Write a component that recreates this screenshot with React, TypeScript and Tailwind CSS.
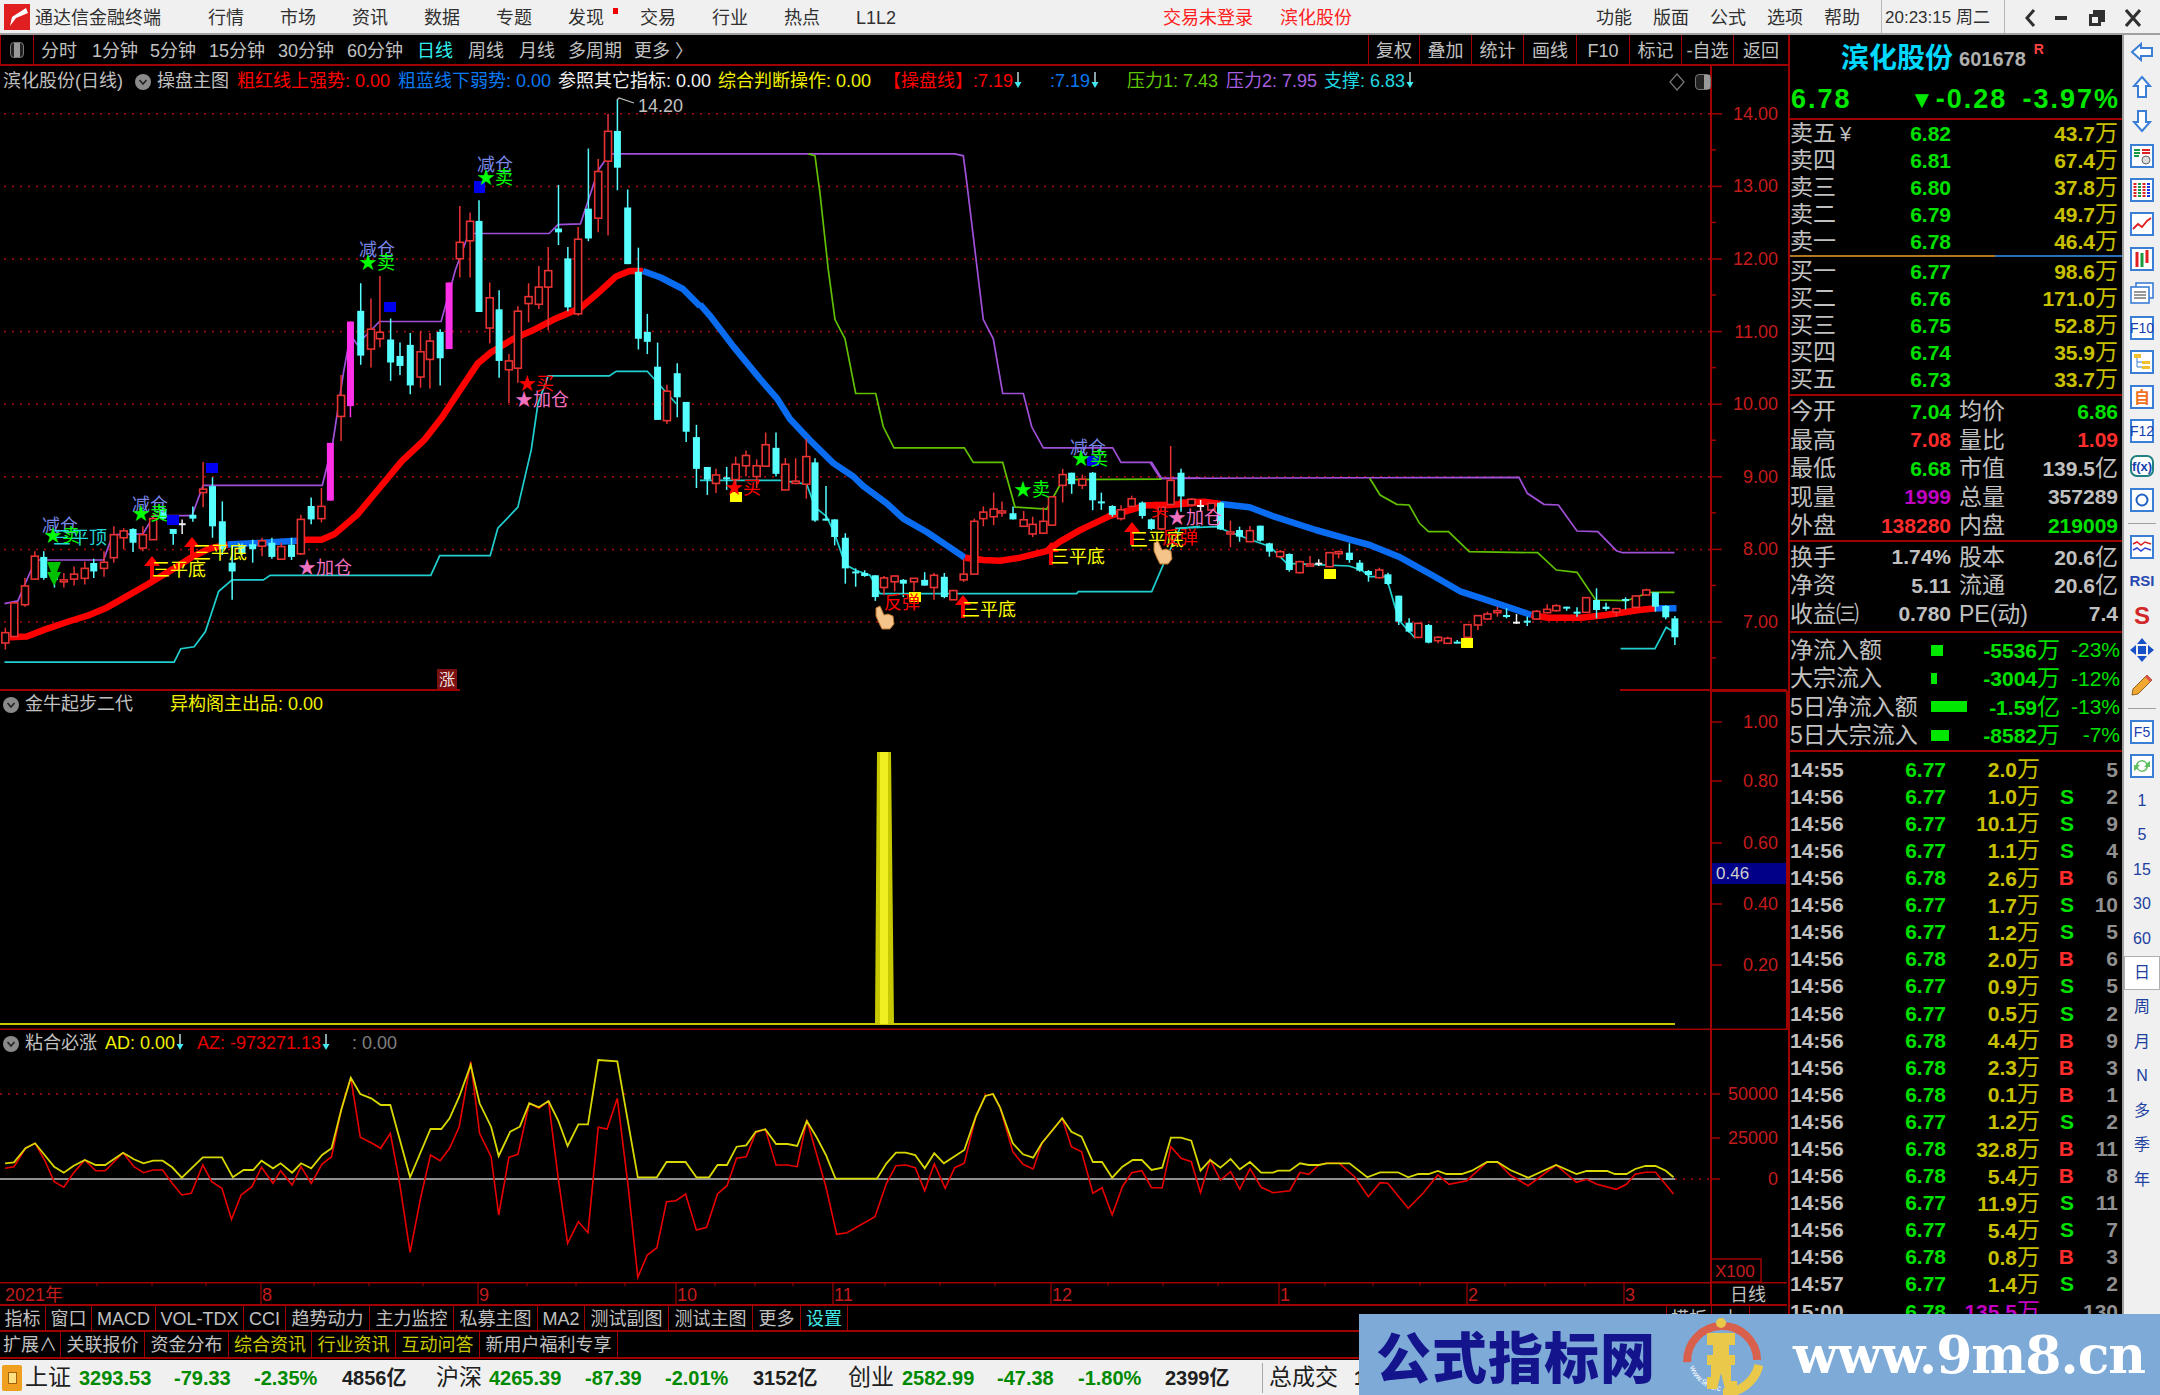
import { ReactNode } from "react";

type Candle = [number, number, number, number, number, string];
type Pt = (x: number, y: number) => [number, number];

// chart data was read off three crops, each with its own scale
const z7: Pt = (x, y) => [x / 2.24, 90 + y / 2.613];
const z8: Pt = (x, y) => [700 + x / 3, 90 + y / 2.613];
const z9: Pt = (x, y) => [1150 + x / 2.412, 400 + y / 3];
const z10: Pt = (x, y) => [x / 1.568, 1020 + y / 3];
const z11: Pt = (x, y) => [1000 + x / 1.96, 1020 + y / 3];

const pts = (f: Pt, a: number[]) => {
  const out: string[] = [];
  for (let i = 0; i < a.length; i += 2) {
    const [x, y] = f(a[i], a[i + 1]);
    out.push(x.toFixed(1) + "," + y.toFixed(1));
  }
  return out.join(" ");
};

const candlesA: Candle[] = [
  [12,1418,1445,1405,1462,"r"],[32,1340,1428,1340,1428,"r"],[56,1296,1345,1275,1350,"r"],[78,1218,1278,1205,1278,"r"],
  [98,1220,1275,1205,1280,"c"],[122,1275,1280,1260,1300,"c"],[143,1280,1284,1262,1300,"r"],[166,1265,1278,1245,1295,"r"],
  [190,1250,1276,1232,1292,"r"],[210,1236,1258,1225,1275,"c"],[233,1234,1250,1205,1272,"r"],[255,1162,1222,1140,1235,"r"],
  [277,1152,1170,1145,1200,"r"],[298,1147,1183,1145,1207,"c"],[320,1162,1197,1140,1205,"r"],[343,1120,1175,1110,1175,"r"],
  [365,1095,1120,1090,1125,"c"],[388,1147,1160,1147,1188,"c"],[408,1132,1135,1122,1160,"w"],[432,1110,1120,1088,1128,"c"],
  [455,1043,1052,972,1090,"r"],[476,1035,1140,1012,1170,"c"],[498,1127,1200,1075,1215,"c"],[520,1235,1258,1190,1332,"c"],
  [542,1190,1210,1185,1215,"c"],[566,1187,1200,1175,1235,"c"],[587,1178,1192,1170,1218,"r"],[609,1183,1220,1170,1225,"c"],
  [630,1193,1226,1183,1228,"r"],[653,1188,1220,1170,1228,"c"],[674,1122,1212,1110,1215,"r"],[697,1087,1122,1065,1135,"c"],
  [720,1088,1120,1040,1130,"r"],[740,922,1073,922,1073,"m"],[764,798,853,745,917,"r"],[785,605,826,605,855,"m"],
  [808,577,694,505,718,"c"],[831,625,677,545,725,"r"],[851,633,650,486,672,"r"],[875,652,712,597,760,"c"],
  [896,695,721,660,745,"c"],[919,666,772,635,795,"c"],[942,684,750,630,778,"r"],[963,656,704,635,780,"r"],
  [986,632,701,625,772,"c"],[1006,503,677,503,677,"m"],[1030,398,441,303,490,"r"],[1053,343,394,320,490,"r"],
  [1073,342,580,288,580,"c"],[1097,543,622,503,662,"r"],[1118,573,708,523,752,"c"],[1140,708,731,690,818,"r"],
  [1160,578,727,565,765,"r"],[1184,540,558,505,607,"r"],[1207,515,560,460,572,"r"],[1228,472,515,410,628,"r"],
  [1251,362,372,248,405,"c"],[1272,440,568,410,578,"c"],[1295,390,585,358,590,"r"],[1318,310,388,153,395,"c"],
  [1340,213,335,180,372,"r"],[1362,108,186,62,380,"r"],[1383,107,203,25,262,"c"],[1406,307,455,260,455,"c"],
  [1430,475,650,412,678,"c"],[1450,632,658,585,690,"c"],[1473,723,862,660,862,"c"],[1494,787,864,770,873,"r"],
  [1517,740,803,714,855,"c"],[1537,815,893,815,920,"c"],[1560,907,990,875,1040,"c"],
];

const candlesB: Candle[] = [
  [22,985,1018,985,1058,"c"],[48,1006,1028,990,1053,"r"],[80,1012,1014,985,1045,"c"],[107,978,1018,958,1040,"r"],
  [138,955,982,942,1010,"r"],[170,982,1010,965,1040,"r"],[197,927,983,895,985,"r"],[228,935,1003,895,1010,"c"],
  [256,978,1045,962,1045,"r"],[287,1022,1028,962,1030,"r"],[319,958,1030,912,1068,"r"],[345,973,1125,962,1128,"c"],
  [378,1120,1125,1035,1125,"c"],[404,1122,1168,1122,1190,"c"],[436,1170,1250,1158,1290,"c"],[467,1258,1262,1250,1298,"c"],
  [494,1262,1270,1255,1272,"c"],[526,1268,1325,1268,1335,"c"],[552,1275,1300,1270,1320,"r"],[584,1270,1285,1268,1310,"r"],
  [610,1280,1290,1278,1325,"c"],[642,1276,1285,1275,1310,"r"],[674,1280,1295,1260,1295,"c"],[702,1268,1300,1262,1332,"r"],
  [733,1272,1325,1262,1328,"c"],[760,1308,1332,1306,1332,"r"],[791,1265,1280,1225,1285,"r"],[823,1127,1265,1120,1265,"r"],
  [850,1103,1120,1088,1140,"r"],[881,1095,1115,1052,1137,"r"],[906,1100,1103,1075,1115,"r"],[939,1106,1122,1088,1122,"c"],
  [971,1123,1140,1100,1142,"r"],[998,1135,1160,1115,1168,"r"],[1030,1127,1158,1090,1160,"r"],[1056,1063,1137,1063,1137,"r"],
  [1088,1005,1033,990,1078,"r"],[1115,1000,1030,1000,1055,"c"],[1147,1017,1033,1005,1043,"r"],[1178,1000,1072,998,1098,"c"],
  [1204,1075,1078,1052,1097,"c"],[1237,1087,1110,1085,1115,"c"],[1263,1097,1120,1085,1125,"r"],[1295,1068,1088,1060,1090,"r"],
  [1327,1078,1113,1075,1120,"c"],[1354,1122,1147,1120,1150,"c"],[1385,1090,1147,1090,1150,"r"],[1412,1020,1083,930,1085,"r"],
  [1443,1000,1062,990,1102,"c"],[1475,1070,1078,1068,1088,"r"],
];

const candlesC: Candle[] = [
  [100,298,315,295,318,"r"],[122,315,318,300,335,"w"],[148,310,330,310,340,"r"],[170,308,388,306,390,"c"],
  [194,396,400,362,442,"r"],[216,390,410,380,425,"c"],[241,392,425,378,425,"r"],[266,377,422,377,425,"c"],
  [288,430,455,428,470,"c"],[314,455,470,450,475,"r"],[336,462,510,460,515,"c"],[361,485,518,482,520,"r"],
  [386,492,497,468,498,"r"],[407,488,491,478,498,"w"],[433,458,500,458,500,"r"],[455,455,460,452,475,"r"],
  [481,458,480,430,488,"c"],[506,488,512,480,515,"c"],[527,513,525,510,545,"c"],[553,510,533,503,535,"r"],
  [574,523,552,518,555,"c"],[600,587,665,587,675,"c"],[625,668,695,655,698,"c"],[647,670,712,668,715,"r"],
  [672,675,728,672,730,"c"],[695,712,722,708,730,"r"],[718,715,730,710,730,"r"],[741,725,730,720,730,"c"],
  [766,674,712,672,715,"r"],[791,647,675,645,690,"r"],[814,642,657,635,658,"r"],[838,632,635,620,650,"r"],
  [860,645,648,625,655,"c"],[884,665,668,642,672,"w"],[910,662,665,650,678,"c"],[932,634,657,630,658,"r"],
  [958,628,638,613,640,"r"],[980,617,632,613,635,"r"],[1005,620,622,620,632,"c"],[1030,635,638,622,650,"c"],
  [1052,593,637,593,637,"r"],[1077,600,630,565,655,"c"],[1100,620,627,608,632,"c"],[1125,626,636,626,650,"r"],
  [1147,597,600,592,628,"c"],[1172,588,622,586,624,"r"],[1197,570,585,566,586,"r"],[1219,577,620,577,635,"c"],
  [1244,618,652,616,658,"c"],[1266,655,712,648,735,"c"],
];

const thick: { c: string; f: Pt; p: number[] }[] = [
  { c: "#ff0000", f: z7, p: [22,1430,60,1428,100,1410,150,1390,200,1372,235,1355,270,1332,330,1292,390,1250,430,1220,470,1198,510,1188] },
  { c: "#0a6cf0", f: z7, p: [510,1188,665,1178] },
  { c: "#ff0000", f: z7, p: [680,1175,720,1175,750,1160,800,1110,850,1040,900,970,950,915,990,855,1030,785,1070,715,1100,685,1150,650,1190,630,1240,600,1300,570,1340,530,1380,487,1410,473,1440,473] },
  { c: "#0a6cf0", f: z7, p: [1440,473,1480,490,1530,520,1568,565] },
  { c: "#0a6cf0", f: z8, p: [0,560,30,590,100,670,180,755,230,805,270,860,330,915,400,975,460,1010,490,1035,560,1080,610,1120,680,1155,740,1190,795,1222] },
  { c: "#ff0000", f: z8, p: [795,1222,850,1228,900,1230,960,1222,1040,1205,1080,1180,1140,1150,1230,1113,1300,1095,1340,1085,1400,1085,1500,1078] },
  { c: "#ff0000", f: z9, p: [70,308,130,305,170,312] },
  { c: "#0a6cf0", f: z9, p: [170,312,240,322,300,350,400,390,480,418,530,435,600,470,680,525,750,575,800,595,860,620,920,645] },
  { c: "#ff0000", f: z9, p: [920,645,960,653,1040,653,1100,645,1180,630,1220,625] },
  { c: "#0a6cf0", f: z9, p: [1220,625,1270,625] },
];

const thin: { c: string; f: Pt; p: number[] }[] = [
  { c: "#a050d8", f: z7, p: [10,1342,40,1335,60,1280,80,1228,232,1228,250,1170,260,1162,320,1160,345,1112,430,1112,455,1033,722,1033,745,925,770,735,785,640,800,665,850,605,988,605,1020,470,1050,375,1230,375,1250,352,1300,350,1340,210,1365,167,1568,167] },
  { c: "#a050d8", f: z8, p: [0,167,765,167,790,172,800,240,825,420,850,600,880,650,908,793,970,793,995,880,1030,935,1238,935,1263,973,1355,973,1385,1015,1500,1014] },
  { c: "#a050d8", f: z9, p: [0,187,25,235,890,232,910,280,950,313,985,315,1030,393,1080,395,1125,452,1140,458,1265,458] },
  { c: "#60c000", f: z8, p: [325,167,345,172,360,270,385,470,405,600,435,650,467,793,527,793,550,880,582,935,793,935,820,973,908,973,945,1090,1040,1095,1075,1040,1090,1018,1385,1017] },
  { c: "#60c000", f: z9, p: [530,235,555,285,595,313,625,315,650,370,672,395,720,395,770,455,935,458,980,510,1030,517,1075,600,1150,602,1205,577,1265,577] },
  { c: "#20d0d0", f: z7, p: [10,1495,390,1495,405,1460,435,1455,460,1415,490,1310,520,1280,590,1280,605,1268,965,1268,985,1217,1098,1217,1115,1145,1160,1090,1190,940,1205,820,1228,747,1365,747,1380,735,1450,735,1515,820] },
  { c: "#20d0d0", f: z8, p: [0,1020,245,1020,320,1030,345,1090,380,1115,404,1160,436,1240,467,1255,510,1268,540,1316,1130,1316,1135,1311,1355,1311,1390,1240,1440,1145,1500,1140] },
  { c: "#20d0d0", f: z9, p: [60,385,160,380,190,395,290,440,330,490,480,498,510,510,530,530,570,530,600,660,640,715] },
  { c: "#20d0d0", f: z9, p: [1135,746,1218,746,1245,682,1268,700] },
];

const yellowA = [8,430,22,427,40,385,55,370,70,405,85,440,100,458,115,438,133,420,150,435,165,435,193,398,210,418,225,430,240,422,255,422,270,442,285,473,318,412,348,412,365,472,382,450,397,450,410,422,428,445,440,430,458,458,472,430,488,445,505,405,520,385,535,270,550,173,565,222,582,235,597,255,612,255,643,472,675,327,692,327,705,295,720,230,738,135,752,250,770,320,782,408,800,335,815,320,830,250,845,262,860,243,875,300,890,378,907,313,922,313,938,120,968,124,1000,472,1030,472,1045,426,1075,426,1092,472,1112,472,1125,435,1140,435,1155,380,1170,376,1185,335,1200,328,1217,372,1235,372,1250,378,1265,303,1280,350,1295,405,1310,476,1375,476,1390,430,1405,398,1420,398,1435,405,1450,445,1465,400,1480,430,1500,405,1512,390,1530,290,1545,228,1557,222,1568,262];
const yellowB = [0,262,25,370,45,403,65,413,82,370,122,295,140,335,160,350,182,426,200,426,220,473,240,440,260,420,278,420,297,450,318,443,335,353,355,353,375,362,393,452,412,420,432,443,452,417,470,448,490,426,512,458,535,458,545,452,568,452,588,430,605,435,625,435,640,430,685,430,720,472,745,457,780,457,800,472,820,462,840,462,858,453,875,462,905,462,925,452,955,426,975,426,1000,450,1035,473,1090,435,1130,462,1150,453,1190,453,1205,462,1228,462,1245,447,1265,438,1285,438,1305,452,1320,472];
const redA = [8,445,22,440,40,385,55,370,70,420,85,485,100,502,115,460,133,420,150,452,165,452,193,398,210,440,225,458,240,450,255,450,270,490,285,525,300,520,318,435,332,485,348,505,363,598,378,525,395,500,410,442,428,490,440,452,458,495,472,440,488,490,505,432,520,410,535,270,550,173,565,352,582,368,597,385,612,340,625,470,643,697,660,530,675,405,690,422,705,385,720,320,738,125,752,340,770,410,782,585,798,412,812,403,830,250,845,265,860,243,875,470,890,670,907,605,922,638,938,322,952,327,968,235,985,500,1000,772,1015,705,1030,683,1045,545,1060,542,1075,522,1092,630,1108,622,1125,522,1140,497,1155,415,1170,410,1185,338,1200,328,1217,435,1235,435,1250,440,1265,300,1295,500,1312,643,1328,638,1372,590,1390,490,1405,437,1420,435,1435,443,1450,512,1465,432,1482,505,1497,443,1512,430,1530,290,1545,228,1557,222,1568,262];
const redB = [0,262,25,395,45,433,65,447,82,370,122,295,140,380,160,395,182,520,200,503,220,585,240,500,258,458,278,452,297,503,318,503,335,380,355,415,375,425,393,518,412,420,432,480,452,455,470,508,490,446,512,502,535,518,568,512,588,457,605,463,625,435,640,430,665,430,695,470,722,530,745,488,760,490,800,565,830,518,858,465,880,493,915,482,955,426,975,426,1000,465,1035,497,1090,435,1130,487,1150,478,1170,493,1208,508,1228,493,1245,463,1265,457,1285,457,1320,522];

const AXIS = "#c41c1c";
const GRID = "#b00808";
const LINE = "#a00000";

function CandleMark({ d, f }: { d: Candle; f: Pt }) {
  const [x, top] = f(d[0], d[1]);
  const bot = f(d[0], d[2])[1];
  const hi = Math.min(f(d[0], d[3])[1], top);
  const lo = Math.max(f(d[0], d[4])[1], bot);
  const kind = d[5];
  const col = kind === "r" ? "#e63232" : kind === "m" ? "#ff30e8" : kind === "w" ? "#f0f0f0" : "#55ffff";
  const w = 7;
  return (
    <g>
      <line x1={x} x2={x} y1={hi} y2={lo} stroke={col} strokeWidth={1.5} />
      {kind === "r" ? (
        <rect x={x - w / 2} y={top} width={w} height={Math.max(bot - top, 2)} fill="#000" stroke={col} strokeWidth={1.6} />
      ) : (
        <rect x={x - w / 2} y={top} width={w} height={Math.max(bot - top, 2)} fill={col} />
      )}
    </g>
  );
}

function Tag({ x, y, c, children, size = 18 }: { x: number; y: number; c: string; children: ReactNode; size?: number }) {
  return (
    <text x={x} y={y} fill={c} fontSize={size} textAnchor="middle" dominantBaseline="central">
      {children}
    </text>
  );
}

const Square = ({ x, y, c }: { x: number; y: number; c: string }) => <rect x={x - 6} y={y - 5} width={12} height={10} fill={c} />;

const UpArrow = ({ x, y }: { x: number; y: number }) => (
  <polygon points={`${x},${y - 10} ${x + 8},${y} ${x + 2},${y} ${x + 2},${y + 13} ${x - 2},${y + 13} ${x - 2},${y} ${x - 8},${y}`} fill="#ff0000" />
);

const Hand = ({ x, y }: { x: number; y: number }) => (
  <g transform={`translate(${x} ${y})`}>
    <path d="M-8 -10 L-4 -12 L0 -3 L4 -4 L9 -2 L10 6 L6 11 L-2 11 L-5 5 L-8 -2 Z" fill="#f4c48a" stroke="#b8742c" strokeWidth={1} />
  </g>
);

function MainChart() {
  const levels = [14, 13, 12, 11, 10, 9, 8, 7];
  const yOf = (p: number) => 622 - (p - 7) * 72.6;
  return (
    <svg viewBox="0 66 1788 625" width={1788} height={625} className="block">
      {levels.map((p) => (
        <g key={p}>
          <line x1={4} x2={1711} y1={yOf(p)} y2={yOf(p)} stroke={GRID} strokeWidth={1.5} strokeDasharray="2 6" />
          <line x1={1711} x2={1722} y1={yOf(p)} y2={yOf(p)} stroke={LINE} strokeWidth={1.5} />
          <line x1={1711} x2={1716} y1={yOf(p) + 36} y2={yOf(p) + 36} stroke={LINE} strokeWidth={1.5} />
          <text x={1778} y={yOf(p)} fill={AXIS} fontSize={18} textAnchor="end" dominantBaseline="central">
            {p.toFixed(2)}
          </text>
        </g>
      ))}
      <line x1={1711} x2={1711} y1={66} y2={691} stroke={LINE} strokeWidth={2} />
      <line x1={0} x2={460} y1={690} y2={690} stroke={LINE} strokeWidth={2} />
      <line x1={1620} x2={1787} y1={690} y2={690} stroke={LINE} strokeWidth={2} />

      {thin.map((l, i) => (
        <polyline key={i} points={pts(l.f, l.p)} fill="none" stroke={l.c} strokeWidth={1.7} />
      ))}
      {thick.map((l, i) => (
        <polyline key={i} points={pts(l.f, l.p)} fill="none" stroke={l.c} strokeWidth={6.5} strokeLinejoin="round" />
      ))}
      {candlesA.map((d, i) => <CandleMark key={i} d={d} f={z7} />)}
      {candlesB.map((d, i) => <CandleMark key={i} d={d} f={z8} />)}
      {candlesC.map((d, i) => <CandleMark key={i} d={d} f={z9} />)}

      <Square x={173} y={520} c="#0000f0" />
      <Square x={212} y={468} c="#0000f0" />
      <Square x={390} y={307} c="#0000f0" />
      <rect x={474} y={181} width={11} height={12} fill="#0000f0" />
      <Square x={1093} y={461} c="#0000f0" />
      <Square x={736} y={497} c="#ffff00" />
      <Square x={1330} y={574} c="#ffff00" />
      <Square x={1467} y={643} c="#ffff00" />
      <Square x={915} y={597} c="#ffff00" />

      <Tag x={60} y={526} c="#7a88ea">减仓</Tag>
      <Tag x={150} y={505} c="#7a88ea">减仓</Tag>
      <Tag x={377} y={250} c="#7a88ea">减仓</Tag>
      <Tag x={495} y={165} c="#7a88ea">减仓</Tag>
      <Tag x={1088} y={448} c="#7a88ea">减仓</Tag>
      <Tag x={62} y={536} c="#00ff00">★卖</Tag>
      <Tag x={150} y={514} c="#00ff00">★卖</Tag>
      <Tag x={377} y={263} c="#00ff00">★卖</Tag>
      <Tag x={495} y={178} c="#00ff00">★卖</Tag>
      <Tag x={1090} y={459} c="#00ff00">★卖</Tag>
      <Tag x={1032} y={490} c="#00ff00">★卖</Tag>
      <Tag x={80} y={538} c="#20d8d8">三平顶</Tag>
      <polygon points="47,562 61,562 57,572 61,572 54,586 47,572 51,572" fill="#00c000" />

      <UpArrow x={152} y={566} />
      <UpArrow x={192} y={547} />
      <UpArrow x={963} y={605} />
      <UpArrow x={1051} y={552} />
      <UpArrow x={1132} y={532} />
      <Tag x={179} y={570} c="#ffff00">三平底</Tag>
      <Tag x={220} y={553} c="#ffff00">三平底</Tag>
      <Tag x={989} y={610} c="#ffff00">三平底</Tag>
      <Tag x={1078} y={557} c="#ffff00">三平底</Tag>
      <Tag x={1157} y={540} c="#ffff00">三平底</Tag>

      <Tag x={536} y={384} c="#ff0000">★买</Tag>
      <Tag x={743} y={488} c="#ff0000">★买</Tag>
      <Tag x={1160} y={510} c="#ff0000">买</Tag>
      <Tag x={542} y={400} c="#f070c0">★加仓</Tag>
      <Tag x={325} y={568} c="#f070c0">★加仓</Tag>
      <Tag x={1195} y={518} c="#f070c0">★加仓</Tag>
      <Tag x={902} y={603} c="#ff0000">反弹</Tag>
      <Tag x={1180} y={538} c="#ff0000">反弹</Tag>
      <Hand x={884} y={618} />
      <Hand x={1162} y={553} />

      <path d="M617 100 L619 98 L634 103" fill="none" stroke="#c0c0c0" strokeWidth={1.2} />
      <text x={638} y={106} fill="#c0c0c0" fontSize={18} dominantBaseline="central">14.20</text>
      <rect x={437} y={669} width={20} height={20} fill="#7a1010" />
      <text x={447} y={679} fill="#f0e0e0" fontSize={16} textAnchor="middle" dominantBaseline="central">涨</text>
    </svg>
  );
}

function MiddleChart() {
  const ticks = [[1, 722], [0.8, 781], [0.6, 843], [0.4, 904], [0.2, 965]];
  return (
    <svg viewBox="0 691 1788 339" width={1788} height={339} className="block">
      {ticks.map(([v, y]) => (
        <g key={v}>
          <line x1={1711} x2={1722} y1={y} y2={y} stroke={LINE} strokeWidth={1.5} />
          <text x={1778} y={y} fill={AXIS} fontSize={18} textAnchor="end" dominantBaseline="central">{v.toFixed(2)}</text>
        </g>
      ))}
      <rect x={1712} y={863} width={75} height={21} fill="#000088" />
      <text x={1716} y={873} fill="#d0d0d0" fontSize={17} dominantBaseline="central">0.46</text>
      <line x1={1711} x2={1711} y1={691} y2={1030} stroke={LINE} strokeWidth={2} />
      <line x1={1711} x2={1787} y1={691} y2={691} stroke={LINE} strokeWidth={2} />
      <line x1={1787} x2={1787} y1={691} y2={1030} stroke={LINE} strokeWidth={2} />
      <line x1={0} x2={1675} y1={1024} y2={1024} stroke="#c8c800" strokeWidth={2} />
      <polygon points="877,752 891,752 894,1024 875,1024" fill="#c8c800" />
      <rect x={880} y={752} width={8} height={272} fill="#f0f020" />
      <line x1={0} x2={1787} y1={1029.5} y2={1029.5} stroke={LINE} strokeWidth={2} />
    </svg>
  );
}

function LowerChart() {
  const ticks = [[50000, 1094], [25000, 1138], [0, 1179]];
  return (
    <svg viewBox="0 1030 1788 252" width={1788} height={252} className="block">
      <line x1={0} x2={1711} y1={1094} y2={1094} stroke={GRID} strokeWidth={1.5} strokeDasharray="2 6" />
      <line x1={1675} x2={1711} y1={1179} y2={1179} stroke={GRID} strokeWidth={1.5} strokeDasharray="2 6" />
      {ticks.map(([v, y]) => (
        <g key={v}>
          <line x1={1711} x2={1720} y1={y} y2={y} stroke={LINE} strokeWidth={1.5} />
          <text x={1778} y={y} fill={AXIS} fontSize={18} textAnchor="end" dominantBaseline="central">{v}</text>
        </g>
      ))}
      <line x1={1711} x2={1711} y1={1030} y2={1282} stroke={LINE} strokeWidth={2} />
      <line x1={0} x2={1675} y1={1179} y2={1179} stroke="#909090" strokeWidth={2} />
      <polyline points={pts(z10, redA)} fill="none" stroke="#e80000" strokeWidth={1.6} />
      <polyline points={pts(z11, redB)} fill="none" stroke="#e80000" strokeWidth={1.6} />
      <polyline points={pts(z10, yellowA)} fill="none" stroke="#d8d800" strokeWidth={1.8} />
      <polyline points={pts(z11, yellowB)} fill="none" stroke="#d8d800" strokeWidth={1.8} />
      <rect x={1711} y={1259} width={50} height={23} fill="none" stroke={LINE} strokeWidth={1.5} />
      <text x={1715} y={1271} fill={AXIS} fontSize={17} dominantBaseline="central">X100</text>
    </svg>
  );
}

function TimeAxis() {
  const majors: [number, string][] = [[261, "8"], [478, "9"], [676, "10"], [833, "11"], [1051, "12"], [1279, "1"], [1467, "2"], [1624, "3"]];
  const minors = [97, 152, 206, 314, 369, 423, 527, 576, 625, 715, 755, 793, 885, 940, 995, 1108, 1163, 1218, 1325, 1373, 1420, 1505, 1545, 1585];
  return (
    <svg viewBox="0 1282 1788 24" width={1788} height={24} className="block">
      <line x1={0} x2={1787} y1={1282.5} y2={1282.5} stroke={LINE} strokeWidth={2} />
      <line x1={0} x2={1787} y1={1305} y2={1305} stroke={LINE} strokeWidth={2} />
      {minors.map((x) => <line key={x} x1={x} x2={x} y1={1282} y2={1286} stroke={LINE} />)}
      {majors.map(([x, t]) => (
        <g key={t}>
          <line x1={x} x2={x} y1={1282} y2={1305} stroke={LINE} strokeWidth={1.2} />
          <text x={x + 1} y={1295} fill={AXIS} fontSize={18} dominantBaseline="central">{t}</text>
        </g>
      ))}
      <text x={5} y={1295} fill={AXIS} fontSize={18} dominantBaseline="central">2021年</text>
      <line x1={1711} x2={1711} y1={1282} y2={1305} stroke={LINE} strokeWidth={2} />
      <text x={1730} y={1295} fill="#c0c0c0" fontSize={18} dominantBaseline="central">日线</text>
    </svg>
  );
}

const Collapse = () => (
  <span className="flex h-[16px] w-[16px] items-center justify-center rounded-full bg-[#8a8a8a] text-[#222]">
    <svg width="10" height="10" viewBox="0 0 10 10"><path d="M1.5 3 L5 7 L8.5 3" fill="none" stroke="#222" strokeWidth="1.6" /></svg>
  </span>
);

const DownTick = () => (
  <svg width="10" height="18" viewBox="0 0 10 18" className="inline-block align-[-3px]">
    <path d="M5 0 V12" stroke="#c8e8f0" strokeWidth="1.4" />
    <path d="M1.5 10 H8.5 L5 16 Z" fill="#40e8f0" />
  </svg>
);

const legendItems: [number, string, string, boolean][] = [
  [237, "粗红线上强势: 0.00", "text-[#ff0000]", false],
  [398, "粗蓝线下弱势: 0.00", "text-[#0a78f0]", false],
  [558, "参照其它指标: 0.00", "text-[#f0f0f0]", false],
  [718, "综合判断操作: 0.00", "text-[#f0f000]", false],
  [883, "【操盘线】:7.19", "text-[#ff0000]", true],
  [1045, " :7.19", "text-[#0a78f0]", true],
  [1127, "压力1: 7.43", "text-[#60c800]", false],
  [1226, "压力2: 7.95", "text-[#a860e0]", false],
  [1324, "支撑: 6.83", "text-[#20d8e0]", true],
];

function MainLegend() {
  const ends = legendItems.map((it, i) => (legendItems[i + 1] ? legendItems[i + 1][0] : 1669) - it[0]);
  return (
    <div className="absolute left-0 top-[2px] flex h-[27px] items-center whitespace-pre text-[18px] text-[#c0c0c0]">
      <span className="ml-[3px] w-[132px]">滨化股份(日线)</span>
      <span className="w-[22px]"><Collapse /></span>
      <span className="w-[80px]">操盘主图</span>
      {legendItems.map((it, i) => (
        <span key={i} className={it[2]} style={{ width: ends[i] }}>
          {it[1]}
          {it[3] && <DownTick />}
        </span>
      ))}
      <svg width="16" height="18" viewBox="0 0 16 18">
        <path d="M8 1 L15 9 L8 17 L1 9 Z" fill="none" stroke="#777" strokeWidth="1.2" />
      </svg>
      <span className="ml-[10px] flex h-[16px] w-[16px] justify-end rounded-sm border border-[#777] bg-[#222]">
        <span className="w-[6px] bg-[#999]" />
      </span>
    </div>
  );
}

const periods: [string, number, boolean][] = [
  ["分时", 51, false], ["1分钟", 58, false], ["5分钟", 59, false], ["15分钟", 69, false], ["30分钟", 69, false], ["60分钟", 70, false],
  ["日线", 51, true], ["周线", 51, false], ["月线", 49, false], ["多周期", 66, false], ["更多 〉", 80, false],
];
const toolButtons: [string, number][] = [["复权", 51], ["叠加", 52], ["统计", 52], ["画线", 53], ["F10", 53], ["标记", 52], ["-自选", 52], ["返回", 55]];

function Toolbar() {
  return (
    <div className="flex h-[31px] items-stretch border-b-2 border-[#a00000] text-[18px] text-[#c0c0c0]">
      <div className="flex w-[34px] items-center justify-center border-r border-l border-[#a00000]">
        <span className="flex h-[16px] w-[14px] justify-center rounded-sm border border-[#777] bg-[#222]">
          <span className="w-[6px] bg-[#999]" />
        </span>
      </div>
      <div className="ml-[7px] flex flex-1 items-center whitespace-nowrap pt-[3px]">
        {periods.map(([t, w, on]) => (
          <span key={t} style={{ width: w }} className={on ? "text-[#30f0f0]" : ""}>{t}</span>
        ))}
      </div>
      <div className="flex">
        {toolButtons.map(([t, w]) => (
          <span key={t} style={{ width: w }} className="flex items-center justify-center border-l border-[#a00000] pt-[3px]">{t}</span>
        ))}
      </div>
    </div>
  );
}

const tabsA: [string, number, string][] = [
  ["指标", 46, ""], ["窗口", 46, ""], ["MACD", 64, ""], ["VOL-TDX", 88, ""], ["CCI", 42, ""], ["趋势动力", 84, ""], ["主力监控", 84, ""],
  ["私募主图", 84, ""], ["MA2", 47, ""], ["测试副图", 84, ""], ["测试主图", 84, ""], ["更多", 48, ""], ["设置", 47, "text-[#40e8e8]"],
];
const tabsB: [string, number, string][] = [
  ["扩展∧", 61, ""], ["关联报价", 84, ""], ["资金分布", 84, ""], ["综合资讯", 83, "text-[#c8c800]"], ["行业资讯", 84, "text-[#c8c800]"],
  ["互动问答", 84, "text-[#c8c800]"], ["新用户福利专享", 138, ""],
];

function TabRow({ items, h, right }: { items: [string, number, string][]; h: string; right?: ReactNode }) {
  return (
    <div className={`flex ${h} border-b-2 border-[#a00000] text-[18px] text-[#c0c0c0]`}>
      {items.map(([t, w, c]) => (
        <span key={t} style={{ width: w }} className={`flex items-center justify-center whitespace-nowrap border-r border-[#a00000] pt-[2px] ${c}`}>{t}</span>
      ))}
      {right}
    </div>
  );
}

const Wan = ({ unit = "万" }: { unit?: string }) => <span className="text-[23px] font-normal">{unit}</span>;

const sells = [["卖五", "6.82", "43.7"], ["卖四", "6.81", "67.4"], ["卖三", "6.80", "37.8"], ["卖二", "6.79", "49.7"], ["卖一", "6.78", "46.4"]];
const buys = [["买一", "6.77", "98.6"], ["买二", "6.76", "171.0"], ["买三", "6.75", "52.8"], ["买四", "6.74", "35.9"], ["买五", "6.73", "33.7"]];

const G = "text-[#00e000]";
const R = "text-[#ff2c2c]";
const W = "text-[#c0c0c0]";
const P = "text-[#c000c0]";

function BookRow({ r, yen }: { r: string[]; yen?: boolean }) {
  return (
    <div className="flex h-[27px] items-center pr-[4px]">
      <div className="flex w-[161px] items-center justify-between">
        <span className="text-[23px] text-[#c0c0c0]">{r[0]}{yen && <span className="ml-[4px] text-[20px]">¥</span>}</span>
        <span className={`text-[21px] font-bold ${G}`}>{r[1]}</span>
      </div>
      <span className="flex-1 text-right text-[21px] font-bold text-[#c8c000]">{r[2]}<Wan /></span>
    </div>
  );
}

const stats: [string, ReactNode, string, string, ReactNode, string][] = [
  ["今开", "7.04", G, "均价", "6.86", G],
  ["最高", "7.08", R, "量比", "1.09", R],
  ["最低", "6.68", G, "市值", <>139.5<Wan unit="亿" /></>, W],
  ["现量", "1999", P, "总量", "357289", W],
  ["外盘", "138280", R, "内盘", "219009", G],
];
const basics: [string, ReactNode, string, string, ReactNode, string][] = [
  ["换手", "1.74%", W, "股本", <>20.6<Wan unit="亿" /></>, W],
  ["净资", "5.11", W, "流通", <>20.6<Wan unit="亿" /></>, W],
  ["收益㈢", "0.780", W, "PE(动)", "7.4", W],
];

function StatRow({ r }: { r: [string, ReactNode, string, string, ReactNode, string] }) {
  return (
    <div className="flex h-[28.5px] items-center pr-[4px] text-[21px] font-bold">
      <div className="flex w-[161px] items-center justify-between">
        <span className="text-[23px] font-normal text-[#c0c0c0]">{r[0]}</span>
        <span className={r[2]}>{r[1]}</span>
      </div>
      <div className="ml-[8px] flex flex-1 items-center justify-between">
        <span className="text-[23px] font-normal text-[#c0c0c0]">{r[3]}</span>
        <span className={r[5]}>{r[4]}</span>
      </div>
    </div>
  );
}

const flows: [string, number, string, string, string][] = [
  ["净流入额", 12, "-5536", "万", "-23%"],
  ["大宗流入", 6, "-3004", "万", "-12%"],
  ["5日净流入额", 36, "-1.59", "亿", "-13%"],
  ["5日大宗流入", 18, "-8582", "万", "-7%"],
];

const ticks: [string, string, string, string, string][] = [
  ["14:55", "6.77", "2.0", "", "5"], ["14:56", "6.77", "1.0", "S", "2"], ["14:56", "6.77", "10.1", "S", "9"], ["14:56", "6.77", "1.1", "S", "4"],
  ["14:56", "6.78", "2.6", "B", "6"], ["14:56", "6.77", "1.7", "S", "10"], ["14:56", "6.77", "1.2", "S", "5"], ["14:56", "6.78", "2.0", "B", "6"],
  ["14:56", "6.77", "0.9", "S", "5"], ["14:56", "6.77", "0.5", "S", "2"], ["14:56", "6.78", "4.4", "B", "9"], ["14:56", "6.78", "2.3", "B", "3"],
  ["14:56", "6.78", "0.1", "B", "1"], ["14:56", "6.77", "1.2", "S", "2"], ["14:56", "6.78", "32.8", "B", "11"], ["14:56", "6.78", "5.4", "B", "8"],
  ["14:56", "6.77", "11.9", "S", "11"], ["14:56", "6.77", "5.4", "S", "7"], ["14:56", "6.78", "0.8", "B", "3"], ["14:57", "6.77", "1.4", "S", "2"],
  ["15:00", "6.78", "135.5", "", "130"],
];

function QuotePanel() {
  return (
    <div className="flex w-[334px] shrink-0 flex-col overflow-hidden border-l-2 border-[#a00000] bg-black">
      <div className="flex h-[47px] items-center pl-[51px]">
        <span className="text-[28px] font-bold leading-none text-[#00d8ff]">滨化股份</span>
        <span className="ml-[6px] text-[20px] font-bold text-[#b0b0b0]">601678</span>
        <span className="mb-[18px] ml-[8px] text-[14px] font-bold text-[#ff4040]">R</span>
      </div>
      <div className="flex h-[36px] items-center pb-[2px] pl-[1px] pr-[2px] text-[27px] font-bold text-[#00e800]">
        <span className="w-[119px] tracking-[2px]">6.78</span>
        <span className="w-[110px] tracking-[2px]"><span className="text-[24px]">▼</span>-0.28</span>
        <span className="flex-1 text-right tracking-[2px]">-3.97%</span>
      </div>
      <div className="h-[2px] bg-[#a00000]" />
      {sells.map((r, i) => <BookRow key={r[0]} r={r} yen={i === 0} />)}
      <div className="flex h-[2px]">
        <div className="w-[205px] bg-[#b07820]" />
        <div className="flex-1 bg-[#2870b8]" />
      </div>
      <div className="h-[1px]" />
      {buys.map((r) => <BookRow key={r[0]} r={r} />)}
      <div className="mt-[1px] h-[2px] bg-[#a00000]" />
      <div className="h-[1px]" />
      {stats.map((r) => <StatRow key={r[0]} r={r} />)}
      <div className="h-[2px] bg-[#a00000]" />
      <div className="h-[1px]" />
      {basics.map((r) => <StatRow key={r[0]} r={r} />)}
      <div className="mt-[3px] h-[2px] bg-[#a00000]" />
      <div className="h-[3px]" />
      {flows.map(([t, w, v, u, pct]) => (
        <div key={t} className={`flex h-[28.3px] items-center pr-[2px] text-[21px] font-bold ${G}`}>
          <span className="w-[141px] text-[23px] font-normal text-[#c0c0c0]">{t}</span>
          <span className="w-[48px]"><span className="block h-[11px] bg-[#00e800]" style={{ width: w }} /></span>
          <span className="w-[81px] text-right">{v}<Wan unit={u} /></span>
          <span className="flex-1 text-right font-normal">{pct}</span>
        </div>
      ))}
      <div className="mt-[1px] h-[2px] bg-[#a00000]" />
      {ticks.map(([t, p, v, s, n], i) => (
        <div key={i} className="grid h-[27.1px] shrink-0 grid-cols-[60px_96px_94px_34px_44px] items-center text-[21px] font-bold">
          <span className="text-[#c0c0c0]">{t}</span>
          <span className={`text-right ${G}`}>{p}</span>
          <span className={`text-right ${v === "135.5" ? P : "text-[#c8c000]"}`}>{v}<Wan /></span>
          <span className={`text-right ${s === "S" ? G : R}`}>{s}</span>
          <span className="text-right text-[#909090]">{n}</span>
        </div>
      ))}
    </div>
  );
}

const ICON = "#3a7fd5";
const Box = ({ children }: { children?: ReactNode }) => (
  <svg width="24" height="24" viewBox="0 0 24 24">
    <rect x="1" y="1" width="22" height="22" fill="#fff" stroke={ICON} strokeWidth="2" />
    {children}
  </svg>
);

const sideIcons: ReactNode[] = [
  <svg width="24" height="20" viewBox="0 0 24 20"><path d="M2 10 L11 2 V6 H22 V14 H11 V18 Z" fill="#fff" stroke={ICON} strokeWidth="2" /></svg>,
  <svg width="20" height="24" viewBox="0 0 20 24"><path d="M10 2 L18 11 H14 V22 H6 V11 H2 Z" fill="#fff" stroke={ICON} strokeWidth="2" /></svg>,
  <svg width="20" height="24" viewBox="0 0 20 24"><path d="M10 22 L18 13 H14 V2 H6 V13 H2 Z" fill="#fff" stroke={ICON} strokeWidth="2" /></svg>,
  <Box><path d="M4 6 H10 M4 9 H10 M4 12 H9" stroke="#1a9a40" strokeWidth="2" /><path d="M12 6 H20 M12 9 H20" stroke="#e02020" strokeWidth="2" /><circle cx="16" cy="16" r="4" fill="#ddd" stroke="#666" /></Box>,
  <Box><path d="M5 5 V19" stroke="#e02020" strokeWidth="3" strokeDasharray="2 1" /><path d="M9.5 5 V19" stroke="#1a9a40" strokeWidth="3" strokeDasharray="2 1" /><path d="M14 5 V19" stroke="#e02020" strokeWidth="3" strokeDasharray="2 1" /><path d="M18.5 5 V19" stroke="#2030e0" strokeWidth="3" strokeDasharray="2 1" /></Box>,
  <Box><path d="M3 17 L8 12 L12 15 L17 9 L21 6" fill="none" stroke="#e02020" strokeWidth="1.8" /></Box>,
  <Box><path d="M7 5 V20" stroke="#e02020" strokeWidth="3" /><path d="M12 6 V20" stroke="#1a9a40" strokeWidth="3" /><path d="M17 3 V16" stroke="#e02020" strokeWidth="3" /></Box>,
  <svg width="24" height="22" viewBox="0 0 24 22"><rect x="6" y="1" width="17" height="15" fill="#fff" stroke={ICON} strokeWidth="1.6" /><rect x="1" y="5" width="18" height="16" fill="#fff" stroke={ICON} strokeWidth="1.6" /><path d="M4 10 H16 M4 13 H16 M4 16 H16" stroke="#777" strokeWidth="1.4" /></svg>,
  <Box><text x="12" y="17" textAnchor="middle" fontSize="14" fill="#1840b0">F10</text></Box>,
  <Box><rect x="4" y="4" width="7" height="4" fill="#f0c030" /><rect x="12" y="11" width="8" height="3" fill="#f0c030" /><rect x="12" y="16" width="8" height="3" fill="#f0c030" /><path d="M7 8 V17 H12 M7 12 H12" fill="none" stroke="#4080d0" /></Box>,
  <Box><text x="12" y="18" textAnchor="middle" fontSize="16" fontWeight="700" fill="#f07020">自</text></Box>,
  <Box><text x="12" y="17" textAnchor="middle" fontSize="14" fill="#1840b0">F12</text></Box>,
  <svg width="24" height="24" viewBox="0 0 24 24"><rect x="1" y="2" width="22" height="20" rx="6" fill="#fff" stroke="#208080" strokeWidth="2" /><text x="12" y="17" textAnchor="middle" fontSize="13" fontWeight="700" fill="#1840b0">f(x)</text></svg>,
  <Box><circle cx="12" cy="12" r="5.5" fill="none" stroke="#2060c0" strokeWidth="2" /></Box>,
  null,
  <Box><path d="M3 9 L7 7 L11 10 L15 7 L21 9" fill="none" stroke="#e02020" strokeWidth="1.5" /><path d="M3 15 L7 13 L11 16 L15 13 L21 15" fill="none" stroke="#3040d0" strokeWidth="1.5" /></Box>,
  <span className="text-[15px] font-bold text-[#2848b0]">RSI</span>,
  <span className="text-[24px] font-bold leading-none text-[#d02828]">S</span>,
  <svg width="26" height="26" viewBox="0 0 26 26" fill="#1850c8"><path d="M13 1 L18 7 H8 Z M13 25 L18 19 H8 Z M1 13 L7 8 V18 Z M25 13 L19 8 V18 Z" /><rect x="9" y="9" width="8" height="8" /></svg>,
  <svg width="24" height="24" viewBox="0 0 24 24"><path d="M17 2 L22 7 L8 21 L2 22 L3 16 Z" fill="#f0a830" stroke="#906020" /><path d="M17 2 L22 7 L20 9 L15 4 Z" fill="#e05050" /></svg>,
  null,
  <Box><text x="12" y="17" textAnchor="middle" fontSize="14" fill="#1840b0">F5</text></Box>,
  <Box><path d="M6 11 A6 6 0 0 1 17 9 L20 7 V13 H14 L16 11 A4 4 0 0 0 8 12 Z M18 13 A6 6 0 0 1 7 15 L4 17 V11 H10 L8 13 A4 4 0 0 0 16 12 Z" fill="#60c060" /></Box>,
  "1", "5", "15", "30", "60", "日", "周", "月", "N", "多", "季", "年",
];

function SideRail() {
  return (
    <div className="flex w-[38px] shrink-0 flex-col border-l-2 border-[#a0a0a0] bg-[#f0f0f0] text-[16px] text-[#2040a0]">
      {sideIcons.map((ic, i) =>
        ic === null ? (
          <div key={i} className="flex h-[12.5px] items-center justify-center">
            <div className="h-[1px] w-[28px] bg-[#a0a0a0]" />
          </div>
        ) : (
          <div key={i} className={`flex h-[34.46px] shrink-0 items-center justify-center ${ic === "日" ? "border border-[#b0b0b0] bg-white" : ""}`}>
            {ic}
          </div>
        )
      )}
    </div>
  );
}

const menus = ["行情", "市场", "资讯", "数据", "专题", "发现", "交易", "行业", "热点", "L1L2"];

function TitleBar() {
  return (
    <div className="flex h-[35px] items-center border-b-2 border-[#a0a0a0] bg-[#f0f0f0] text-[18px] text-[#303030]">
      <svg width="26" height="26" viewBox="0 0 26 26" className="ml-[4px]">
        <rect width="26" height="26" fill="#e02020" />
        <path d="M22 4 L8 13 L6 22 L12 14 L24 9 Z" fill="#fff" />
      </svg>
      <span className="ml-[5px] w-[173px] pt-[3px]">通达信金融终端</span>
      {menus.map((m) => (
        <span key={m} className="relative w-[72px] pt-[3px]">
          {m}
          {m === "发现" && <span className="absolute left-[45px] top-[6px] h-[6px] w-[5px] bg-[#f00000]" />}
        </span>
      ))}
      <span className="ml-[235px] w-[117px] pt-[3px] text-[#ff2020]">交易未登录</span>
      <span className="w-[316px] pt-[3px] text-[#ff2020]">滨化股份</span>
      {["功能", "版面", "公式", "选项"].map((m) => <span key={m} className="w-[57px] pt-[3px]">{m}</span>)}
      <span className="w-[57px] pt-[3px]">帮助</span>
      <span className="flex h-full w-[124px] items-center whitespace-nowrap border-x border-[#b8b8b8] pl-[3px] pt-[3px] text-[17px]">20:23:15 周二</span>
      <span className="flex flex-1 items-center justify-around px-[10px] pt-[3px] text-[#303030]">
        <svg width="12" height="18" viewBox="0 0 12 18"><path d="M10 1 L3 9 L10 17" fill="none" stroke="#303030" strokeWidth="3" /></svg>
        <svg width="14" height="6" viewBox="0 0 14 6"><rect y="1" width="12" height="4" fill="#303030" /></svg>
        <svg width="18" height="18" viewBox="0 0 18 18"><path d="M5 1 H17 V13 H13 V5 H5 Z M1 5 H13 V17 H1 Z M4 8 V14 H10 V8 Z" fill="#303030" fillRule="evenodd" /></svg>
        <svg width="16" height="18" viewBox="0 0 16 18"><path d="M1 1 L15 17 M15 1 L1 17" stroke="#303030" strokeWidth="3" /></svg>
      </span>
    </div>
  );
}

const statusItems: [string, number, string][] = [
  ["上证", 54, "text-[23px] text-[#202020]"], ["3293.53", 95, "text-[#008a00]"], ["-79.33", 80, "text-[#008a00]"], ["-2.35%", 88, "text-[#008a00]"], ["4856亿", 94, "text-[#202020]"],
  ["沪深", 53, "text-[23px] text-[#202020]"], ["4265.39", 96, "text-[#008a00]"], ["-87.39", 80, "text-[#008a00]"], ["-2.01%", 88, "text-[#008a00]"], ["3152亿", 95, "text-[#202020]"],
  ["创业", 54, "text-[23px] text-[#202020]"], ["2582.99", 95, "text-[#008a00]"], ["-47.38", 81, "text-[#008a00]"], ["-1.80%", 87, "text-[#008a00]"], ["2399亿", 97, "text-[#202020]"],
];

function StatusBar() {
  return (
    <div className="flex h-[35px] items-center whitespace-nowrap bg-[#f0f0f0] text-[20px] font-bold">
      <span className="ml-[2px] flex h-[26px] w-[20px] items-center justify-center rounded-[2px] bg-[#f0a020]">
        <span className="h-[12px] w-[9px] border border-[#a06010] bg-[#ffe080]" />
      </span>
      <span className="w-[3px]" />
      {statusItems.map(([t, w, c]) => (
        <span key={t} style={{ width: w }} className={`font-bold ${c.includes("23px") ? "font-normal" : ""} ${c}`}>{t}</span>
      ))}
      <span className="h-[30px] w-[1px] bg-[#a8a8a8]" />
      <span className="ml-[6px] w-[85px] text-[23px] font-normal text-[#202020]">总成交</span>
      <span className="text-[#202020]">11586亿</span>
    </div>
  );
}

function Banner() {
  return (
    <div className="absolute left-[1359px] top-[1314px] flex h-[81px] w-[801px] items-center bg-[#7eaad8]">
      <span className="ml-[17px] w-[305px] text-[55px] font-black leading-none tracking-[1px] text-[#14148c] [font-family:'Noto_Sans_CJK_SC',sans-serif]">公式指标网</span>
      <svg width="82" height="80" viewBox="0 0 82 80">
        <path d="M6 46 A35 35 0 0 1 76 46" fill="none" stroke="#d9604c" strokeWidth="8" transform="rotate(-2 41 41)" />
        <path d="M78 50 A37 37 0 0 1 42 78" fill="none" stroke="#e9c84a" strokeWidth="9" />
        <path id="wmArc" d="M9 52 A35 35 0 0 0 38 76" fill="none" />
        <text fontSize="8" fill="#fff"><textPath href="#wmArc">www.9m8.cn</textPath></text>
        <circle cx="40" cy="8" r="5" fill="#e9c84a" />
        <path d="M26 18 H54 V30 H48 V40 H54 V50 H50 V66 H56 V74 H44 L40 58 L36 74 H26 V62 H30 V50 H26 V40 H32 V30 H26 Z" fill="#e9c84a" />
      </svg>
      <span className="ml-[30px] text-[52px] font-bold leading-none tracking-[-1px] text-white [font-family:'DejaVu_Serif',serif]">www.9m8.cn</span>
    </div>
  );
}

export default function App() {
  return (
    <div className="relative flex h-[1395px] w-[2160px] flex-col overflow-hidden bg-black [font-family:'Liberation_Sans','Noto_Sans_CJK_SC',sans-serif]">
      <TitleBar />
      <div className="flex min-h-0 flex-1">
        <div className="flex w-[1788px] shrink-0 flex-col">
          <Toolbar />
          <div className="relative">
            <MainChart />
            <MainLegend />
          </div>
          <div className="relative">
            <MiddleChart />
            <div className="absolute left-[3px] top-[0px] flex h-[27px] items-center text-[18px] text-[#c0c0c0]">
              <Collapse />
              <span className="ml-[6px] w-[145px]">金牛起步二代</span>
              <span className="text-[#f0f000]">异构阁主出品: 0.00</span>
            </div>
          </div>
          <div className="relative">
            <LowerChart />
            <div className="absolute left-[3px] top-[0px] flex h-[27px] items-center whitespace-pre text-[18px] text-[#c0c0c0]">
              <Collapse />
              <span className="ml-[6px] w-[80px]">粘合必涨</span>
              <span className="w-[92px] text-[#f0f000]">AD: 0.00<DownTick /></span>
              <span className="w-[150px] text-[#e80000]">AZ: -973271.13<DownTick /></span>
              <span className="text-[#808080]"> : 0.00</span>
            </div>
          </div>
          <TimeAxis />
          <TabRow
            items={tabsA}
            h="h-[26px]"
            right={
              <div className="ml-auto flex">
                <span className="flex w-[46px] items-center justify-center border-x border-[#a00000] pt-[2px]">模板</span>
                <span className="flex w-[38px] items-center justify-center border-r border-[#a00000] pt-[2px]">十</span>
                <span className="w-[38px]" />
              </div>
            }
          />
          <TabRow items={tabsB} h="h-[27px]" />
        </div>
        <QuotePanel />
        <SideRail />
      </div>
      <StatusBar />
      <Banner />
    </div>
  );
}
